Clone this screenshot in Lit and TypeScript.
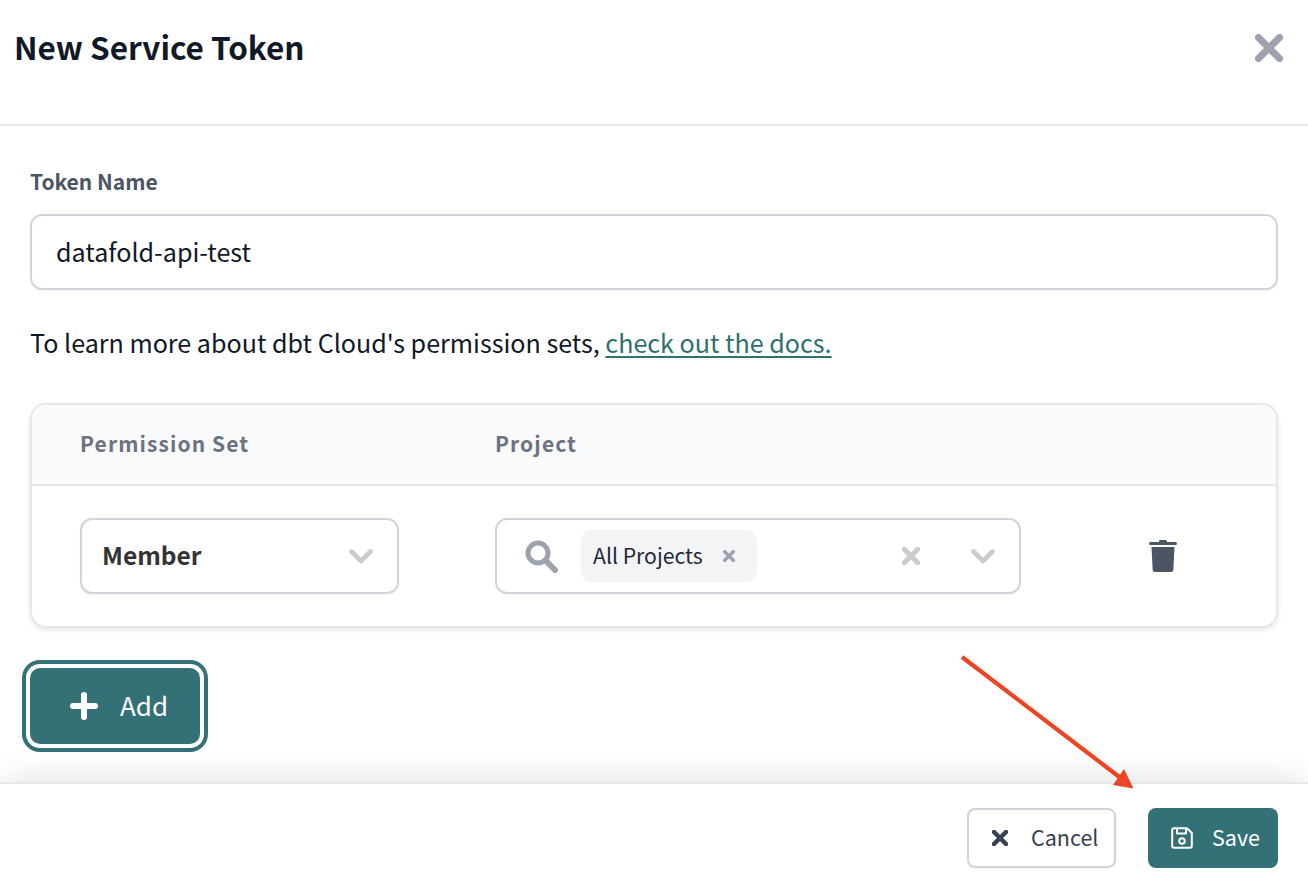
import { LitElement, html, css, svg } from "lit";
import { customElement } from "lit/decorators.js";

const xIcon = (size: number, sw: number, color: string) => html`<svg class="ic" width=${size} height=${size} viewBox="0 0 28 28" fill="none" stroke=${color} stroke-width=${sw} stroke-linecap="round"><path d="M3.5 3.5 24.5 24.5M24.5 3.5 3.5 24.5"/></svg>`;
const chevron = () => html`<svg class="ic" width="24" height="15" viewBox="0 0 24 15" fill="none" stroke="#cccccc" stroke-width="4.6" stroke-linecap="round" stroke-linejoin="round"><path d="M2.5 2.5 12 12 21.5 2.5"/></svg>`;

@customElement("app-root")
export class AppRoot extends LitElement {
  static styles = css`
    :host {
      display: flex;
      flex-direction: column;
      width: 1308px;
      height: 886px;
      position: relative;
      overflow: hidden;
      background: #fff;
      font-family: "Noto Sans CJK SC", "Source Sans Pro", "Noto Sans", sans-serif;
      color: #111827;
    }
    .ic { display: block; flex: none; }
    .up { margin-bottom: 3px; }
    .head {
      box-sizing: border-box;
      border-bottom: 2px solid #e5e7eb;
      height: 126px;
      padding: 30px 25px 0 14px;
      display: flex;
      justify-content: space-between;
      align-items: flex-start;
    }
    h1 {
      margin: 0;
      font-size: 31.5px;
      line-height: 32px;
      font-weight: 600;
      color: #111827;
    }
    .close { margin-top: 4px; }
    .main {
      flex: 1;
      padding: 42px 30px 0;
      min-height: 0;
    }
    .lab {
      font-size: 21px;
      line-height: 26px;
      font-weight: 600;
      color: #4b5563;
      margin-bottom: 20px;
    }
    .input {
      height: 76px;
      box-sizing: border-box;
      border: 2px solid #d1d5db;
      border-radius: 12px;
      padding: 0 24px;
      display: flex;
      align-items: center;
      font-size: 25.1px;
      color: #111827;
      box-shadow: 0 1px 2px rgba(0,0,0,.05);
    }
    .para {
      margin: 35px 0 44px;
      font-size: 25.1px;
      line-height: 34px;
      color: #111827;
    }
    .para a { color: #2f7070; text-decoration: underline; text-underline-offset: 3px; }
    .table {
      height: 225px;
      box-sizing: border-box;
      border: 2px solid #e5e7eb;
      border-radius: 16px;
      box-shadow: 0 2px 5px rgba(0,0,0,.1);
      overflow: hidden;
    }
    .thead {
      height: 81px;
      box-sizing: border-box;
      background: #f9fafb;
      border-bottom: 2px solid #e5e7eb;
      display: flex;
      align-items: center;
      padding-left: 48px;
      font-size: 21px;
      font-weight: 600;
      letter-spacing: 1.1px;
      color: #6b7280;
    }
    .thead .c1 { width: 415px; }
    .row {
      display: flex;
      align-items: center;
      padding: 32px 0 0 48px;
    }
    .select {
      width: 319px;
      height: 76px;
      box-sizing: border-box;
      border: 2px solid #d1d5db;
      border-radius: 12px;
      margin-right: 96px;
      padding: 0 24px 0 20px;
      display: flex;
      align-items: center;
      justify-content: space-between;
      font-size: 24.5px;
      font-weight: 600;
      color: #333;
      box-shadow: 0 1px 2px rgba(0,0,0,.05);
    }
    .multi {
      width: 526px;
      height: 76px;
      box-sizing: border-box;
      border: 2px solid #d1d5db;
      border-radius: 12px;
      padding: 0 24px 0 28px;
      display: flex;
      align-items: center;
      box-shadow: 0 1px 2px rgba(0,0,0,.05);
    }
    .chip {
      margin-left: 23px;
      width: 176px;
      height: 52px;
      box-sizing: border-box;
      background: #f3f4f6;
      border-radius: 10px;
      padding: 0 22px 0 12px;
      display: flex;
      align-items: center;
      justify-content: space-between;
      font-size: 21.2px;
      color: #1f2937;
    }
    .clear { margin-left: auto; margin-right: 51px; }
    .trash { margin-left: 128px; }
    .add-wrap { padding: 40px 0 0; }
    .add {
      width: 170px;
      height: 76px;
      box-sizing: border-box;
      background: #347176;
      border-radius: 10px;
      box-shadow: 0 0 0 4px #fff, 0 0 0 8px #347176;
      color: #fff;
      font-size: 26px;
      display: flex;
      align-items: center;
      padding-left: 40px;
      gap: 22px;
    }
    .foot {
      height: 104px;
      box-sizing: border-box;
      border-top: 2px solid #e5e7eb;
      background: #fff;
      box-shadow: 0 -10px 30px -6px rgba(0,0,0,.12);
      display: flex;
      justify-content: flex-end;
      align-items: flex-start;
      padding: 24px 30px 0 0;
      gap: 32px;
      position: relative;
    }
    .btn {
      height: 60px;
      box-sizing: border-box;
      border-radius: 8px;
      display: flex;
      align-items: center;
      font-size: 21.5px;
    }
    .cancel {
      width: 149px;
      border: 2px solid #d1d5db;
      color: #374151;
      padding-left: 23px;
      gap: 23px;
      box-shadow: 0 1px 2px rgba(0,0,0,.05);
    }
    .save {
      width: 130px;
      background: #347176;
      color: #fff;
      padding-left: 23px;
      gap: 19px;
    }
    .arrow { position: absolute; left: 0; top: 0; pointer-events: none; }
  `;

  render() {
    return html`
      <div class="head">
        <h1>New Service Token</h1>
        <div class="close">${xIcon(28, 7, "#9ca3af")}</div>
      </div>
      <div class="main">
        <div class="lab">Token Name</div>
        <div class="input"><span class="up">datafold-api-test</span></div>
        <p class="para">To learn more about dbt Cloud's permission sets, <a>check out the docs.</a></p>
        <div class="table">
          <div class="thead"><div class="c1 up">Permission Set</div><div class="up">Project</div></div>
          <div class="row">
            <div class="select"><span class="up">Member</span>${chevron()}</div>
            <div class="multi">
              <svg class="ic" width="33" height="33" viewBox="0 0 33 33" fill="none" stroke="#9ca3af" stroke-linecap="round"><circle cx="13" cy="13" r="10" stroke-width="5"/><path d="M21 21 30 30" stroke-width="6"/></svg>
              <div class="chip"><span class="up">All Projects</span>${xIcon(12, 8, "#9ca3af")}</div>
              <div class="clear">${xIcon(18, 8, "#cccccc")}</div>
              ${chevron()}
            </div>
            <svg class="ic trash" width="28" height="32" viewBox="0 0 28 32" fill="#4b5563"><path d="M10 1.5C10 .7 10.7 0 11.5 0h5c.8 0 1.5.7 1.5 1.5V2h8.5a1.5 1.5 0 0 1 0 3h-25a1.5 1.5 0 0 1 0-3H10z"/><path d="M2.5 7h23l-1.2 23c-.1 1.1-1 2-2.1 2H5.8c-1.1 0-2-.9-2.1-2z"/></svg>
          </div>
        </div>
        <div class="add-wrap">
          <div class="add">
            <svg class="ic" width="28" height="28" viewBox="0 0 28 28" fill="none" stroke="#fff" stroke-width="6" stroke-linecap="round"><path d="M14 3v22M3 14h22"/></svg>
            <span class="up">Add</span>
          </div>
        </div>
      </div>
      <div class="foot">
        <div class="btn cancel">${xIcon(16, 8, "#374151")}<span class="up">Cancel</span></div>
        <div class="btn save">
          <svg class="ic" width="22" height="22" viewBox="0 0 22 22" fill="none" stroke="#fff" stroke-width="2" stroke-linejoin="round"><path d="M3 1.2h13l4.8 4.8v13a1.8 1.8 0 0 1-1.8 1.8H3A1.8 1.8 0 0 1 1.2 19V3A1.8 1.8 0 0 1 3 1.2z"/><path d="M6 1.5v5h9v-5"/><circle cx="11" cy="14" r="2.8"/></svg>
          <span class="up">Save</span>
        </div>
      </div>
      <svg class="arrow" width="1308" height="886" viewBox="0 0 1308 886">
        ${svg`<path d="M962 657 1122 779" stroke="#ee4423" stroke-width="4.2" fill="none"/><path d="M1133.5 788.5 1124 769 1113 785z" fill="#ee4423"/>`}
      </svg>
    `;
  }
}
